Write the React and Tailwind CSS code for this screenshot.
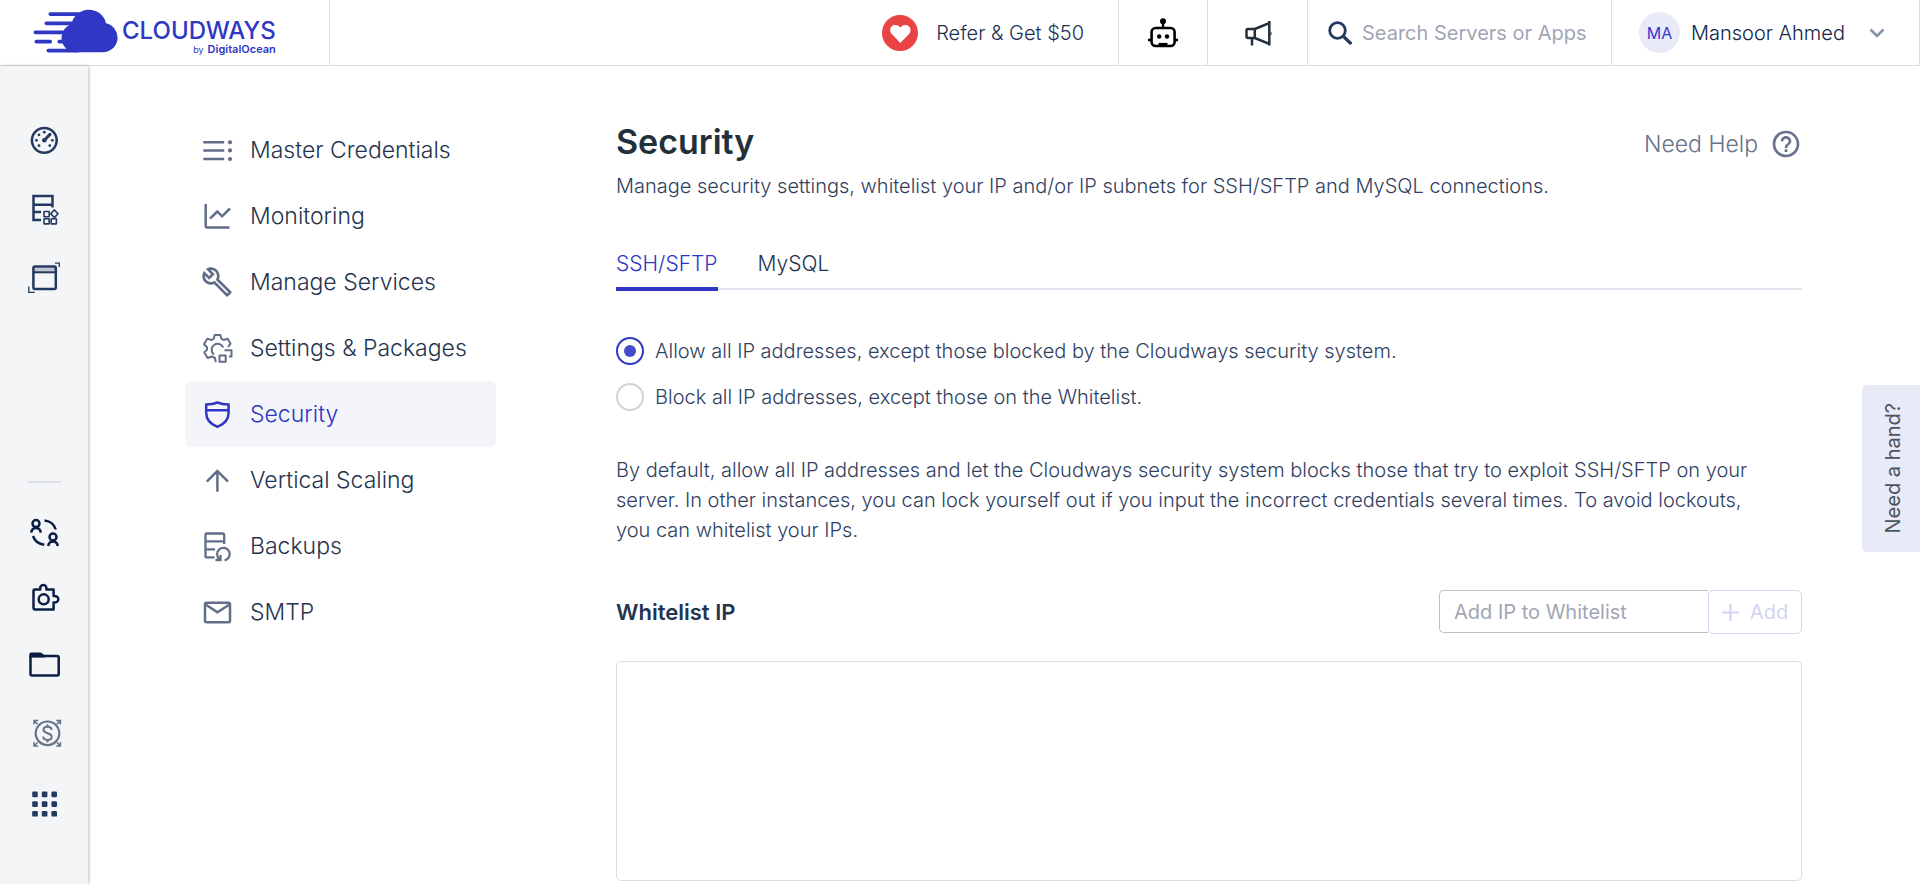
import { useState } from "react";
import { MdHelpOutline, MdOutlineBuild } from "react-icons/md";

function Icon({ children, className = "" }) {
  return (
    <svg
      className={`size-8 shrink-0 overflow-visible ${className}`}
      viewBox="0 0 32 32"
      fill="none"
      stroke="currentColor"
      strokeWidth="2.5"
      aria-hidden="true"
    >
      {children}
    </svg>
  );
}

const GaugeIcon = () => (
  <Icon>
    <circle cx="16.3" cy="16.3" r="12.4" />
    <path d="M16.3 16.3 22 10.4" strokeWidth="3" strokeLinecap="round" />
    <g fill="currentColor" stroke="none">
      <circle cx="16.3" cy="16.3" r="2.3" />
      <circle cx="16.3" cy="8.2" r="1.4" />
      <circle cx="11" cy="10.8" r="1.4" />
      <circle cx="8.4" cy="16.3" r="1.4" />
      <circle cx="11" cy="21.6" r="1.4" />
      <circle cx="21.8" cy="21.6" r="1.4" />
      <circle cx="24.4" cy="16.3" r="1.4" />
    </g>
  </Icon>
);

const ServersIcon = () => (
  <Icon>
    <path d="M13 27H5.5V3h19v11.5M5.5 11.8h19M5.5 19H13" />
    <g strokeWidth="1.6">
      <rect x="16" y="18.5" width="5.2" height="5.2" rx=".5" />
      <rect x="16" y="25.7" width="5.2" height="5.2" rx=".5" />
      <rect x="23.2" y="25.7" width="5.2" height="5.2" rx=".5" />
      <path d="m26.4 17 3.6 3.8-3.6 3.8-3.6-3.8z" />
    </g>
  </Icon>
);

const WindowIcon = () => (
  <Icon>
    <path d="M5.5 6h22v4h-22z" fill="currentColor" fillOpacity=".25" stroke="none" />
    <rect x="5.4" y="4.6" width="22.4" height="22.4" rx="1.5" />
    <path d="M5.4 10.3h22.4" strokeWidth="2" />
    <path d="M27 1.2h4.3V5M.8 24.6v5.7h6" strokeWidth="1.3" />
  </Icon>
);

const TransferIcon = () => (
  <Icon>
    <circle cx="8" cy="7.6" r="3.5" />
    <path d="M3.2 16.6c.5-3 2.3-4.5 4.8-4.5s4.3 1.5 4.8 4.5" />
    <circle cx="25" cy="21" r="3.5" />
    <path d="M20.2 30c.5-3 2.3-4.5 4.8-4.5s4.3 1.5 4.8 4.5" />
    <path d="M16.5 4.5c5.3.3 9.8 4 11.3 9M5 20c1.7 4.8 6 8.2 11.3 8.7" />
  </Icon>
);

const PuzzleIcon = () => (
  <Icon>
    <path
      d="M6.7 7.5h5.5c-.2-3.1 1-4.6 3.1-4.6s3.3 1.5 3.1 4.6h7.2v6.4c3.1-.2 4.7 1.1 4.7 3.3s-1.6 3.5-4.7 3.3v7H6.7c-.8 0-1.2-.4-1.2-1.2V8.7c0-.8.4-1.2 1.2-1.2z"
      strokeLinejoin="round"
    />
    <circle cx="15.7" cy="17.3" r="5" />
  </Icon>
);

const FolderIcon = () => (
  <Icon>
    <rect x="2.5" y="8" width="28.2" height="19.6" rx="1.5" />
    <path d="M1.3 9.5v-3c0-1.2.8-1.9 2-1.9h9.2c1.6 0 2.6 2.6 4.5 2.6v2.3z" fill="currentColor" stroke="none" />
  </Icon>
);

const DollarIcon = () => (
  <Icon className="text-[#66738b]">
    <g transform="translate(3)">
      <circle cx="16.5" cy="16.3" r="11.8" strokeWidth="2.2" />
      <path d="M20.5 13c0-2-1.7-3.2-4-3.2s-4 1-4 3c0 4.4 8.2 2.5 8.2 6.9 0 2-1.800 3.200-4.200 3.200s-4.300-1.200-4.300-3.300M16.500 7.300v2.500M16.500 22.900v2.500" strokeWidth="2" />
      <path d="M3 7.500V3.600h4.200M25.200 3.600h4.200v3.900M3 25v4h4.200M25.200 29h4.200v-4M3 3.600l3.500 3.500M29.400 3.600l-3.500 3.500M3 29l3.500-3.500M29.400 29l-3.500-3.500" strokeWidth="1.5" />
    </g>
  </Icon>
);

const AppsIcon = () => (
  <Icon>
    <g fill="currentColor" stroke="none">
      {[3.6, 13.3, 23].map((y) =>
        [4.2, 13.8, 23.4].map((x) => <rect key={`${x}-${y}`} x={x} y={y} width="5.6" height="5.6" rx="1.2" />)
      )}
    </g>
  </Icon>
);

const ListIcon = () => (
  <Icon>
    <path d="M2.3 8.3h20.9M2.3 16.4h20.9M2.3 25h20.9" />
    <g fill="currentColor" stroke="none">
      <circle cx="29" cy="8.3" r="2.1" />
      <circle cx="29" cy="16.4" r="2.1" />
      <circle cx="29" cy="25" r="2.1" />
    </g>
  </Icon>
);

const ChartIcon = () => (
  <Icon>
    <path d="M4.7 4v22q0 1.4 1.4 1.4h22.4" />
    <path d="m9 18.7 7.3-7.2 4.7 4.8 8-7.8" />
  </Icon>
);

const WrenchIcon = () => <MdOutlineBuild className="size-8 shrink-0" aria-hidden="true" />;

const GearIcon = () => (
  <Icon>
    <g strokeWidth="2" strokeLinejoin="round">
      <path d="M14.8 30.2 14 26l-3.300-1.500-4 1.500-3.400-5.600L6 17.800v-2.500L3 12.200l3.300-5.400 4.300 1.200 2.200-1.300.8-3.600h5.800l1 3.600 2.200 1.300 4-1.200 3 4.900-2.500 3.300" />
      <path d="M13 22.5a6 6 0 1 1 9.2-7" />
      <rect x="18.5" y="23.5" width="6.2" height="6.2" />
      <path d="M23.5 18.3h7v6.2H28" />
    </g>
  </Icon>
);

const ShieldIcon = () => (
  <Icon>
    <path d="M16.4 4.5c3.5 1.500 7 2 11.200 2.100v8.200c0 6.700-4.700 11.600-11.200 14-6.500-2.400-11.200-7.300-11.200-14V6.600c4.200-.1 7.700-.6 11.200-2.100zM5.200 12.300h22.400" />
  </Icon>
);

const ArrowUpIcon = () => (
  <Icon>
    <path d="M16.4 26.8V7.5M6.5 16.8l9.9-9.7 9.9 9.7" strokeLinecap="round" />
  </Icon>
);

const BackupIcon = () => (
  <Icon>
    <path d="M13.5 27.4H6q-1.500 0-1.500-1.500V5q0-1.500 1.500-1.500h15.700q1.500 0 1.500 1.500v9M4.500 11.400h18.700M4.500 19.300H14" strokeWidth="2.3" />
    <path d="M18.8 29.3a6.3 6.3 0 1 1 4.8 1M14.5 30h5v-5" strokeWidth="2.3" />
  </Icon>
);

const MailIcon = () => (
  <Icon>
    <rect x="4" y="6.8" width="25" height="19.5" rx="1.5" />
    <path d="m4.5 8.5 12 7.7 12-7.7" />
  </Icon>
);

const HeartBadge = () => (
  <svg className="size-9" viewBox="0 0 36 36" aria-hidden="true">
    <circle cx="18" cy="18" r="18" fill="#ea4343" />
    <path d="M18.3 28 9.8 19C7.6 16.5 7.7 13.2 9.6 11.4c2.500-2.300 6.300-1.800 8.700 1 2.400-2.800 6.200-3.300 8.700-1 1.900 1.800 2.200 5.100 0 7.600z" fill="#fff" />
  </svg>
);

const RobotIcon = () => (
  <Icon className="text-black">
    <rect x="4.6" y="11" width="23" height="18" rx="4" strokeWidth="2.6" />
    <path d="M16 3v8M1 23h3M28 23h3" strokeWidth="2.4" />
    <path d="M11.5 29.5v-3.6h9v3.6z" fill="currentColor" stroke="none" />
    <g fill="currentColor" stroke="none">
      <circle cx="16" cy="4.2" r="3" />
      <circle cx="12.2" cy="19.5" r="2.2" />
      <circle cx="20" cy="19.5" r="2.2" />
    </g>
  </Icon>
);

const MegaphoneIcon = () => (
  <Icon className="text-[#22303c]">
    <path d="M12.8 12H6q-1.500 0-1.500 1.500v6Q4.500 21 6 21h6.800zM12.800 12l14.500-6v21l-14.500-6M10 21v7.500M27.300 4v24.500" />
    <path d="M28.500 14.500c1.600.5 1.600 3.500 0 4z" fill="currentColor" stroke="none" />
  </Icon>
);

function Logo() {
  return (
    <a href="#" className="flex items-start gap-1 text-[#2f37c4]" aria-label="Cloudways by DigitalOcean">
      <svg className="h-11 w-[85px]" viewBox="98 28 256 132" aria-hidden="true">
        <path
          d="M226 158a43 43 0 0 1-12-84A53 53 0 0 1 318 71a44 44 0 0 1-10 87z"
          fill="currentColor"
        />
        <path
          d="M150 43h90M138 71h90M105 98h90M108 126h42M177 126h20M144 153h90"
          stroke="currentColor"
          strokeWidth="11"
          strokeLinecap="round"
        />
      </svg>
      <span className="flex flex-col items-end pt-2.5">
        <span className="text-2xl leading-6 font-medium">CLOUDWAYS</span>
        <span className="flex items-baseline gap-1 text-[11px] leading-3 font-semibold">
          <span className="text-[9px] font-normal">by</span>DigitalOcean
        </span>
      </span>
    </a>
  );
}

function Header() {
  return (
    <header className="flex h-[66px] border-b border-[#dcdde3]">
      <div className="flex w-[330px] items-start border-r border-[#dcdde3] pt-[9px] pl-[33px]">
        <Logo />
      </div>
      <div className="ml-auto flex border-r border-[#dcdde3]">
        <a href="#" className="flex items-center gap-[18px] border-r border-[#dcdde3] pr-[34px] text-xl text-[#1d2f54]">
          <HeartBadge />
          Refer &amp; Get $50
        </a>
        <button className="flex w-[89px] items-center justify-center border-r border-[#dcdde3]" aria-label="Assistant">
          <RobotIcon />
        </button>
        <button className="flex w-[100px] items-center justify-center border-r border-[#dcdde3]" aria-label="Announcements">
          <MegaphoneIcon />
        </button>
        <div className="flex w-[304px] items-center gap-2.5 border-r border-[#dcdde3] pl-5 text-[#24395f]">
          <svg className="size-6 shrink-0" viewBox="0 0 24 24" fill="none" stroke="currentColor" strokeWidth="2.8" aria-hidden="true">
            <circle cx="9.5" cy="9.5" r="7.8" />
            <path d="m15 15 8.3 8" strokeWidth="3.2" />
          </svg>
          <input
            type="text"
            aria-label="Search Servers or Apps"
            placeholder="Search Servers or Apps"
            className="w-full min-w-0 text-xl font-normal outline-none placeholder:text-[#a0a6b4]"
          />
        </div>
        <button className="flex w-[307px] items-center pl-[27px] text-xl text-[#12244a]">
          <span className="flex size-[41px] items-center justify-center rounded-full bg-[#e8eaf7] text-base font-normal text-[#3a35cf]">
            MA
          </span>
          <span className="ml-[11px]">Mansoor Ahmed</span>
          <svg className="ml-auto mr-[34px] h-3 w-4" viewBox="0 0 16 12" fill="none" stroke="#8791a8" strokeWidth="2.6" aria-hidden="true">
            <path d="m1.500 2.500 6.500 6.500 6.500-6.500" />
          </svg>
        </button>
      </div>
    </header>
  );
}

function Rail() {
  return (
    <aside className="flex w-[88px] shrink-0 flex-col items-center bg-[#f3f5f7] pt-[58px] text-[#24395f] shadow-[1px_0_3px_rgba(0,0,0,0.25)]">
      <div className="flex flex-col gap-[37px]">
        <button aria-label="Dashboard" className="block"><GaugeIcon /></button>
        <button aria-label="Servers" className="block"><ServersIcon /></button>
        <button aria-label="Applications" className="block"><WindowIcon /></button>
      </div>
      <hr className="mt-[187px] w-[33px] border-t-2 border-[#dcdfe7]" />
      <div className="mt-[33px] flex flex-col gap-[34px] text-[#0b1f45]">
        <button aria-label="Team" className="block"><TransferIcon /></button>
        <button aria-label="Add-ons" className="block"><PuzzleIcon /></button>
        <button aria-label="Projects" className="block"><FolderIcon /></button>
        <button aria-label="Affiliate" className="block pt-[3px]"><DollarIcon /></button>
        <button aria-label="More" className="block pt-[5px] text-[#24395f]"><AppsIcon /></button>
      </div>
    </aside>
  );
}

const menu = [
  { label: "Master Credentials", icon: ListIcon },
  { label: "Monitoring", icon: ChartIcon },
  { label: "Manage Services", icon: WrenchIcon },
  { label: "Settings & Packages", icon: GearIcon },
  { label: "Security", icon: ShieldIcon, active: true },
  { label: "Vertical Scaling", icon: ArrowUpIcon },
  { label: "Backups", icon: BackupIcon },
  { label: "SMTP", icon: MailIcon },
];

function ServerMenu() {
  return (
    <nav className="w-[311px] shrink-0 pt-[51px]">
      {menu.map(({ label, icon: ItemIcon, active }) => (
        <a
          key={label}
          href="#"
          className={`flex h-[66px] items-center gap-[17px] rounded-md pl-4 text-[23px] ${
            active ? "bg-[#f4f5fb] text-[#2f37c4]" : "text-[#24344f]"
          }`}
        >
          <span className={active ? "" : "text-[#616e88]"}>
            <ItemIcon />
          </span>
          {label}
        </a>
      ))}
    </nav>
  );
}

const tabs = ["SSH/SFTP", "MySQL"];

const policies = [
  { id: "allow", label: "Allow all IP addresses, except those blocked by the Cloudways security system." },
  { id: "block", label: "Block all IP addresses, except those on the Whitelist." },
];

function SecurityPanel() {
  const [tab, setTab] = useState("SSH/SFTP");
  const [policy, setPolicy] = useState("allow");
  const [ip, setIp] = useState("");

  return (
    <main className="mr-[118px] ml-[120px] min-w-0 flex-1 pt-14 pb-[3px] text-xl text-[#30415f]">
      <div className="flex items-center justify-between">
        <h1 className="text-[34px] leading-10 font-semibold text-[#22303c]">Security</h1>
        <a href="#" className="flex items-center gap-3 pt-1 text-[23px] text-[#66738b]">
          Need Help
          <MdHelpOutline className="size-8" aria-hidden="true" />
        </a>
      </div>
      <p className="mt-2 leading-8">
        Manage security settings, whitelist your IP and/or IP subnets for SSH/SFTP and MySQL connections.
      </p>

      <div role="tablist" className="mt-9 flex gap-10 border-b-2 border-[#e2e3ec]">
        {tabs.map((name) => (
          <button
            key={name}
            role="tab"
            aria-selected={tab === name}
            onClick={() => setTab(name)}
            className={`-mb-[3px] h-[53px] rounded-t-xs border-b-4 pt-0.5 text-[21px] ${
              tab === name ? "border-[#2f37c4] text-[#2f37c4]" : "border-transparent text-[#24344f]"
            }`}
          >
            {name}
          </button>
        ))}
      </div>

      <fieldset aria-label="IP access policy" className="mt-[47px] flex flex-col gap-[18px]">
        {policies.map(({ id, label }) => (
          <label key={id} className="flex items-center gap-[11px]">
            <input
              type="radio"
              name="policy"
              checked={policy === id}
              onChange={() => setPolicy(id)}
              className="flex size-7 shrink-0 appearance-none items-center justify-center rounded-full border-2 border-[#d3d3d3] before:size-3 before:rounded-full checked:border-[#2f37c4] checked:before:bg-[#464cc9]"
            />
            {label}
          </label>
        ))}
      </fieldset>

      <p className="mt-11 pr-7 leading-[30px]">
        By default, allow all IP addresses and let the Cloudways security system blocks those that try to exploit
        SSH/SFTP on your server. In other instances, you can lock yourself out if you input the incorrect credentials
        several times. To avoid lockouts, you can whitelist your IPs.
      </p>

      <div className="mt-[45px] flex items-center justify-between">
        <h2 className="text-[22px] font-semibold text-[#24344f]">Whitelist IP</h2>
        <form className="flex items-start font-normal" onSubmit={(e) => e.preventDefault()}>
          <input
            type="text"
            aria-label="Add IP to Whitelist"
            placeholder="Add IP to Whitelist"
            value={ip}
            onChange={(e) => setIp(e.target.value)}
            className="h-[43px] w-[269px] rounded-l-[5px] border border-r-0 border-[#bcc1ce] pl-3.5 outline-none placeholder:text-[#a0a6b4]"
          />
          <button
            type="submit"
            disabled={!ip}
            className="flex h-11 w-[94px] items-center justify-center gap-[11px] rounded-[5px] border border-[#d2d5f3] bg-white text-[#2f37c4] disabled:text-[#d2d5f3]"
          >
            <svg className="size-[17px]" viewBox="0 0 17 17" stroke="currentColor" strokeWidth="2.2" aria-hidden="true">
              <path d="M8.500 0v17M0 8.500h17" />
            </svg>
            Add
          </button>
        </form>
      </div>

      <div className="mt-[27px] h-[220px] rounded-[5px] border border-[#dcdde3]" />
    </main>
  );
}

function App() {
  return (
    <div className="flex min-h-screen flex-col bg-white font-['Inter','Open_Sans',sans-serif] font-light">
      <Header />
      <div className="flex flex-1">
        <Rail />
        <div className="ml-[97px] flex min-w-0 flex-1">
          <ServerMenu />
          <SecurityPanel />
        </div>
      </div>
      <button className="fixed top-[385px] right-0 flex h-[167px] w-[58px] items-center justify-center rounded-l-[5px] bg-[#e8eaf7] pl-1 text-xl font-normal text-[#4a5560]">
        <span className="rotate-180 [writing-mode:vertical-rl]">Need a hand?</span>
      </button>
    </div>
  );
}

export default App;
